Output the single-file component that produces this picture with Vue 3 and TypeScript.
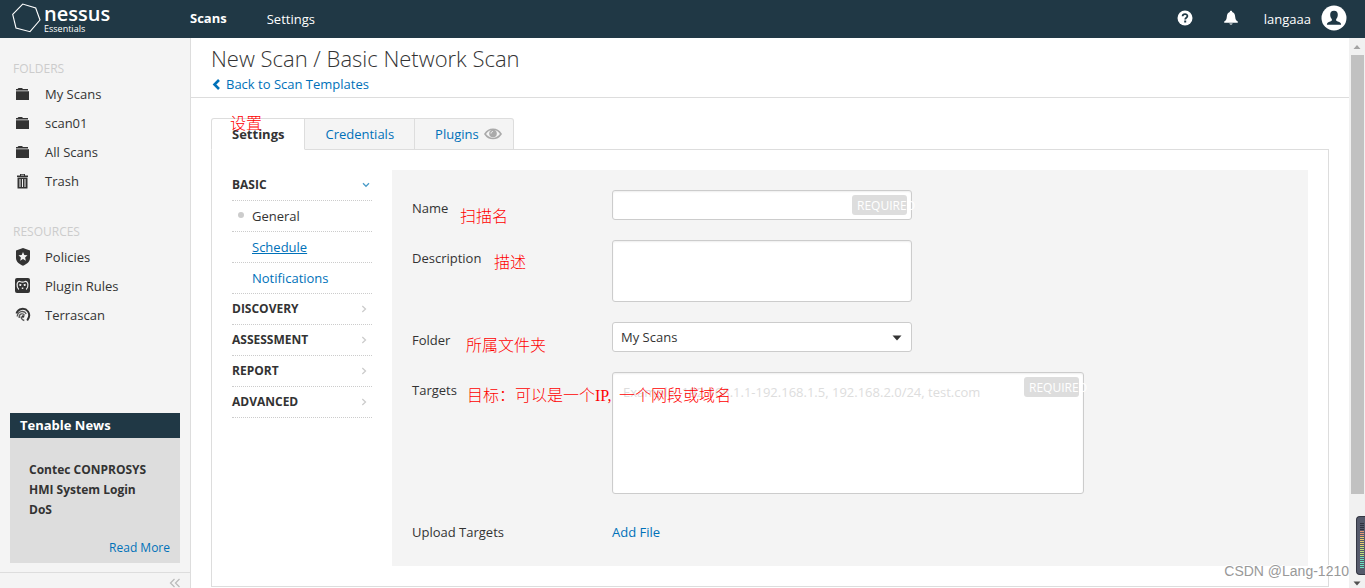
<script setup lang="ts">
import { ref } from 'vue'

interface Entry {
  label: string
  icon: string
}

const folders: Entry[] = [
  { label: 'My Scans', icon: 'folder' },
  { label: 'scan01', icon: 'folder' },
  { label: 'All Scans', icon: 'folder' },
  { label: 'Trash', icon: 'trash' },
]
const resources: Entry[] = [
  { label: 'Policies', icon: 'shield' },
  { label: 'Plugin Rules', icon: 'plugin' },
  { label: 'Terrascan', icon: 'terrascan' },
]
const groups = [
  { title: 'Folders', entries: folders },
  { title: 'Resources', entries: resources },
]
const basicPages = ['General', 'Schedule', 'Notifications']
const sections = ['Discovery', 'Assessment', 'Report', 'Advanced']
const meterBars = Array.from({ length: 23 }, (_, i) => i)

const name = ref('')
const description = ref('')
const folder = ref('My Scans')
const targets = ref('')

function meterClass(i: number): string {
  if (i < 4) return 'off'
  if (i < 7) return 'hot'
  if (i < 12) return 'warm'
  if (i < 17) return 'mild'
  return 'cool'
}
</script>

<template>
  <div class="app">
    <header class="topbar">
      <a class="brand" href="#" aria-label="nessus Essentials">
        <svg class="brand-mark" viewBox="0 0 32 32" aria-hidden="true">
          <path d="M1.7 12.3 11.7 2 24.7 6 29 18 19 29.7 5 26Z" />
        </svg>
        <span class="brand-text">
          <span class="brand-name">nessus</span>
          <span class="brand-edition">Essentials</span>
        </span>
      </a>
      <nav class="mainnav">
        <a class="current" href="#">Scans</a>
        <a href="#">Settings</a>
      </nav>
      <div class="account">
        <button class="icon-btn" type="button" aria-label="Help">
          <svg width="16" height="16" viewBox="0 0 16 16">
            <circle cx="8" cy="8" r="7.5" fill="#fff" />
            <path d="M5.6 6.3C5.7 3.5 10.4 3.5 10.4 6.1 10.4 7.7 8.2 7.7 8.2 9.4" fill="none" stroke="#203845" stroke-width="1.8" />
            <rect x="7.2" y="10.5" width="2" height="2" fill="#203845" />
          </svg>
        </button>
        <button class="icon-btn bell" type="button" aria-label="Notifications">
          <svg width="16" height="16" viewBox="0 0 16 16">
            <path d="M8 .8c.8 0 1.2.5 1.2 1.2C11.4 2.6 12 4.5 12.2 7c.2 2.4.8 3.6 2.6 4.6v1.2H1.2v-1.2C3 10.6 3.6 9.400 3.800 7 4 4.500 4.600 2.600 6.800 2 6.800 1.300 7.200.8 8 .8Z" fill="#fff" />
            <path d="M6.300 13.500h3.400c-.3 1.500-3.100 1.500-3.400 0Z" fill="#fff" />
          </svg>
        </button>
        <a class="user" href="#">
          <span>langaaa</span>
          <svg width="26" height="26" viewBox="0 0 26 26" aria-hidden="true">
            <circle cx="13" cy="13" r="12.500" fill="#fff" />
            <path d="M13 5.800c2.600 0 3.800 1.600 3.800 4 0 2-.7 3.200-1.600 4.300-.4 1.500.2 2 1.500 2.500 2.400.8 3.400 1.200 3.400 3.100H5.900c0-1.900 1-2.300 3.400-3.100 1.300-.5 1.900-1 1.500-2.500-.9-1.100-1.600-2.300-1.600-4.300 0-2.400 1.200-4 3.800-4Z" fill="#203845" />
          </svg>
        </a>
      </div>
    </header>

    <div class="body">
      <aside class="sidebar">
        <section v-for="g in groups" :key="g.title" class="group">
          <h2>{{ g.title }}</h2>
          <a v-for="e in g.entries" :key="e.label" class="entry" href="#">
            <svg v-if="e.icon === 'folder'" width="16" height="16" viewBox="0 0 16 16" aria-hidden="true">
              <path d="M1 4.500V3h1.500L3.500 2h3.500l1 1h5v1.500ZM1 5.200h13V14H1Z" />
            </svg>
            <svg v-else-if="e.icon === 'trash'" width="16" height="16" viewBox="0 0 16 16" aria-hidden="true">
              <path d="M5 2.500V1h5v1.500h3V4H2V2.500h3ZM6 2.500h3V1.800H6ZM2.500 4.500h10V15.500h-10ZM4.500 6v8h1V6ZM7 6v8h1V6ZM9.500 6v8h1V6Z" fill-rule="evenodd" />
            </svg>
            <svg v-else-if="e.icon === 'shield'" width="16" height="18" viewBox="0 0 16 18" aria-hidden="true">
              <path d="M8 0 15 2.500v7.500c0 4-4 6.500-7 7.800C5 16.500 1 14 1 10V2.500ZM8 4 6.700 7 3.500 7.300 5.900 9.500 5.200 12.700 8 11l2.800 1.700-.7-3.200 2.400-2.200L9.300 7Z" fill-rule="evenodd" />
            </svg>
            <svg v-else-if="e.icon === 'plugin'" width="16" height="16" viewBox="0 0 16 16" aria-hidden="true">
              <rect width="15" height="15" rx="2" />
              <path d="M5 3.500C1.500 3 1.200 9 3.800 11.500M10 3.500c3.500-.5 3.800 5.500 1.200 8M5 3.500c1.500.8 3.500.8 5 0" fill="none" stroke="#eee" stroke-width="1.200" />
              <path d="M4.300 5.800 6.500 6.300 6 8H4.500ZM10.700 5.800 8.500 6.300 9 8h1.500ZM6.800 9.500h1.500V11H6.800Z" fill="#eee" />
            </svg>
            <svg v-else width="16" height="16" viewBox="0 0 16 16" aria-hidden="true">
              <path d="M1.500 6.500C3 1 10 .5 13 4.500c2 3 1.500 6-.8 9" fill="none" stroke="#333" stroke-width="2" />
              <path d="M2.200 9.500C2.500 4 9.500 3 11.200 7M4.200 11C3.500 6.500 8.500 5.500 9.500 8.500" fill="none" stroke="#555" stroke-width="1.300" />
              <path d="M6 9.500c.2 2.200 1.500 3.500 3.300 4" fill="none" stroke="#555" stroke-width="1.300" />
              <circle cx="8" cy="9.500" r="1.300" />
            </svg>
            <span>{{ e.label }}</span>
          </a>
        </section>

        <section class="news">
          <h3>Tenable News</h3>
          <div class="news-body">
            <p>Contec CONPROSYS HMI System Login DoS</p>
            <a href="#">Read More</a>
          </div>
        </section>
        <div class="collapse">
          <button type="button" aria-label="Collapse sidebar">
            <svg width="12" height="10" viewBox="0 0 12 10">
              <path d="M5.500 1 1.500 5l4 4M10.500 1l-4 4 4 4" fill="none" stroke="#bbb" stroke-width="1.300" />
            </svg>
          </button>
        </div>
      </aside>

      <main class="main">
        <div class="pagehead">
          <h1>New Scan / Basic Network Scan</h1>
          <a href="#">
            <svg width="9" height="11" viewBox="0 0 9 11" aria-hidden="true">
              <path d="M8 1 3.500 5.500 8 10" fill="none" stroke="#0071b9" stroke-width="2.600" />
            </svg>
            <span>Back to Scan Templates</span>
          </a>
        </div>

        <div class="content">
          <div class="tabs" role="tablist">
            <button class="tab active" type="button" role="tab">Settings</button>
            <button class="tab" type="button" role="tab">Credentials</button>
            <button class="tab plugins" type="button" role="tab">
              <span>Plugins</span>
              <svg width="18" height="12" viewBox="0 0 18 12" aria-hidden="true">
                <path d="M1 6C5-.3 13-.3 17 6 13 12 5 12 1 6Z" fill="none" stroke="#aaa" stroke-width="1.600" />
                <circle cx="9" cy="5.500" r="3.800" fill="#aaa" />
                <path d="M7 5.500C7 4.300 7.800 3.500 9 3.500" fill="none" stroke="#f4f4f4" />
              </svg>
            </button>
            <span class="note note-settings" lang="zh">设置</span>
          </div>

          <div class="panel">
            <nav class="sections">
              <button class="section" type="button">
                <span>Basic</span>
                <svg class="open" width="8" height="6" viewBox="0 0 8 6"><path d="M1 1.300 4 4.300 7 1.300" /></svg>
              </button>
              <a v-for="p in basicPages" :key="p" href="#" class="subpage" :class="{ current: p === 'General', hovered: p === 'Schedule' }">{{ p }}</a>
              <button v-for="s in sections" :key="s" class="section" type="button">
                <span>{{ s }}</span>
                <svg class="closed" width="6" height="8" viewBox="0 0 6 8"><path d="M1.300 1 4.500 4 1.300 7" /></svg>
              </button>
            </nav>

            <form class="form" @submit.prevent>
              <div class="row">
                <div class="label-cell">
                  <label for="f-name">Name</label>
                  <span class="note note-name" lang="zh">扫描名</span>
                </div>
                <div class="field">
                  <input id="f-name" v-model="name" type="text" />
                  <span class="required">Required</span>
                </div>
              </div>
              <div class="row">
                <div class="label-cell">
                  <label for="f-desc">Description</label>
                  <span class="note note-desc" lang="zh">描述</span>
                </div>
                <div class="field">
                  <textarea id="f-desc" v-model="description" class="desc"></textarea>
                </div>
              </div>
              <div class="row">
                <div class="label-cell">
                  <label for="f-folder">Folder</label>
                  <span class="note note-folder" lang="zh">所属文件夹</span>
                </div>
                <div class="field">
                  <select id="f-folder" v-model="folder">
                    <option>My Scans</option>
                    <option>scan01</option>
                  </select>
                  <svg class="caret" width="10" height="6" viewBox="0 0 10 6" aria-hidden="true"><path d="M.5.500h9L5 5.500Z" fill="#333" /></svg>
                </div>
              </div>
              <div class="row">
                <div class="label-cell">
                  <label for="f-targets">Targets</label>
                  <span class="note note-targets" lang="zh">目标：可以是一个<span class="latin">IP,</span>一个网段或域名</span>
                </div>
                <div class="field wide">
                  <textarea id="f-targets" v-model="targets" class="targets" placeholder="Example: 192.168.1.1-192.168.1.5, 192.168.2.0/24, test.com"></textarea>
                  <span class="required">Required</span>
                </div>
              </div>
              <div class="row upload">
                <div class="label-cell"><span>Upload Targets</span></div>
                <a href="#">Add File</a>
              </div>
            </form>
          </div>
        </div>
      </main>

      <div class="scrollbar" aria-hidden="true">
        <svg class="arrow" viewBox="0 0 16 17"><path d="M4.500 11 8 7l3.500 4Z" fill="#a3a3a3" /></svg>
        <div class="thumb"></div>
        <div class="rest"></div>
        <svg class="arrow" viewBox="0 0 16 17"><path d="M4.500 10.500 8 14.500l3.500-4Z" fill="#505050" /></svg>
      </div>
    </div>

    <div class="meter" aria-hidden="true">
      <i v-for="i in meterBars" :key="i" :class="meterClass(i)"></i>
    </div>
    <div class="watermark">CSDN @Lang-1210</div>
  </div>
</template>

<style>
html,
body {
  margin: 0;
  overflow: hidden;
}
</style>

<style scoped>
.app {
  position: relative;
  display: flex;
  flex-direction: column;
  height: 100vh;
  overflow: hidden;
  background: #fff;
  color: #333;
  font: 13px/20px "Open Sans", "Noto Sans CJK SC", sans-serif;
}
.app * {
  box-sizing: border-box;
}
a {
  color: #0071b9;
  text-decoration: none;
}
button {
  margin: 0;
  padding: 0;
  border: 0;
  background: none;
  color: inherit;
  font: inherit;
  text-align: left;
}
svg {
  display: block;
  flex: none;
}
h1,
h2,
h3,
p {
  margin: 0;
}

/* top bar */
.topbar {
  display: flex;
  flex: none;
  height: 38px;
  background: #203845;
}
.brand {
  display: flex;
  width: 190px;
  padding-left: 11px;
  color: #fff;
}
.brand-mark {
  width: 32px;
  height: 32px;
  margin-top: 2px;
}
.brand-mark path {
  fill: none;
  stroke: #fff;
  stroke-width: 1.1;
}
.brand-text {
  display: flex;
  flex-direction: column;
  padding: 4px 0 0 1px;
}
.brand-name {
  font-size: 20px;
  font-weight: 600;
  line-height: 20px;
}
.brand-edition {
  font-size: 9px;
  line-height: 10px;
}
.mainnav {
  display: flex;
  gap: 40px;
  line-height: 38px;
}
.mainnav a {
  color: #fff;
}
.mainnav .current {
  font-weight: 700;
  line-height: 36px;
}
.account {
  display: flex;
  align-items: center;
  margin-left: auto;
  padding: 0 18px 3px 0;
}
.icon-btn {
  margin-right: 30px;
}
.icon-btn.bell {
  margin-right: 25px;
}
.user {
  display: flex;
  align-items: center;
  gap: 10px;
  color: #fff;
}
.user span {
  padding-top: 3px;
}

.body {
  display: flex;
  flex: 1;
  min-height: 0;
}

/* sidebar */
.sidebar {
  display: flex;
  flex: none;
  flex-direction: column;
  width: 191px;
  border-right: 1px solid #ddd;
  background: #f4f4f4;
}
.group {
  padding-top: 21px;
}
.group + .group {
  padding-top: 27px;
}
.group h2 {
  padding-left: 13px;
  color: #ccc;
  font-size: 12px;
  font-weight: 400;
  text-transform: uppercase;
}
.entry {
  display: flex;
  align-items: center;
  gap: 14px;
  height: 29px;
  padding-left: 15px;
  color: #333;
}
.entry svg {
  width: 16px;
  fill: #333;
}
.news {
  margin: auto 10px 9px;
  background: #ddd;
}
.news h3 {
  padding-left: 10px;
  background: #203845;
  color: #fff;
  font-size: 13px;
  font-weight: 700;
  line-height: 25px;
}
.news-body {
  display: flex;
  flex-direction: column;
  gap: 18px;
  padding: 22px 10px 5px 19px;
  font-size: 12px;
}
.news-body p {
  max-width: 130px;
  font-weight: 700;
}
.news-body a {
  align-self: flex-end;
}
.collapse {
  display: flex;
  flex: none;
  justify-content: flex-end;
  height: 16px;
  padding: 5px 9px 0 0;
  border-top: 1px solid #ddd;
}

/* main column */
.main {
  flex: 1;
  min-width: 0;
  overflow: hidden;
}
.pagehead {
  height: 60px;
  padding: 5px 20px 0;
  border-bottom: 1px solid #ddd;
}
.pagehead h1 {
  font-size: 22px;
  font-weight: 300;
  line-height: 30px;
}
.pagehead a {
  display: inline-flex;
  align-items: center;
  gap: 6px;
  line-height: 22px;
}
.content {
  padding: 20px 20px 0;
}
.tabs {
  position: relative;
  display: flex;
  width: max-content;
  margin-bottom: -1px;
}
.tab {
  height: 32px;
  padding: 0 20px;
  border: 1px solid #ddd;
  border-left-width: 0;
  background: #f4f4f4;
  color: #0071b9;
}
.tab.active {
  border-left-width: 1px;
  border-bottom-color: #fff;
  border-top-left-radius: 3px;
  background: #fff;
  color: #333;
  font-weight: 700;
}
.tab.plugins {
  display: flex;
  align-items: center;
  gap: 5px;
  padding-right: 11px;
  border-top-right-radius: 3px;
}
.panel {
  display: flex;
  gap: 20px;
  padding: 20px;
  border: 1px solid #ddd;
}
.sections {
  display: flex;
  flex: none;
  flex-direction: column;
  width: 140px;
}
.section,
.subpage {
  height: 31px;
  border-bottom: 1px dotted #ccc;
}
.section {
  display: flex;
  align-items: center;
  justify-content: space-between;
  padding-right: 2px;
  font-size: 12px;
  font-weight: 700;
  text-transform: uppercase;
}
.section path {
  fill: none;
  stroke: #ccc;
  stroke-width: 1.3;
}
.section .open path {
  stroke: #4a9cc9;
}
.section .closed {
  margin-right: 3px;
}
.subpage {
  position: relative;
  padding-left: 20px;
  line-height: 31px;
}
.subpage.current {
  color: #333;
}
.subpage.current::before {
  content: "";
  position: absolute;
  top: 11px;
  left: 6px;
  width: 6px;
  height: 6px;
  border-radius: 50%;
  background: #ccc;
}
.subpage.hovered {
  text-decoration: underline;
}

/* form */
.form {
  display: flex;
  flex: 1;
  flex-direction: column;
  gap: 20px;
  min-width: 0;
  padding: 20px;
  background: #f4f4f4;
}
.row {
  display: flex;
}
.label-cell {
  position: relative;
  flex: none;
  width: 200px;
  padding-top: 8px;
}
.field {
  position: relative;
  width: 300px;
}
.field.wide {
  width: 472px;
}
input,
textarea,
select {
  display: block;
  width: 100%;
  height: 30px;
  margin: 0;
  padding: 0 8px;
  border: 1px solid #ccc;
  border-radius: 3px;
  outline: 0;
  background: #fff;
  box-shadow: inset 0 1px 2px #eee;
  color: #333;
  font: inherit;
  resize: none;
  appearance: none;
}
textarea {
  padding: 9px 10px;
}
.desc {
  height: 62px;
}
.targets {
  height: 122px;
}
select {
  box-shadow: none;
}
textarea::placeholder {
  color: #ddd;
  opacity: 1;
}
.required {
  position: absolute;
  top: 5px;
  right: 5px;
  width: 55px;
  height: 20px;
  padding-left: 5px;
  border-radius: 3px;
  background: #ddd;
  color: #fff;
  font-size: 12px;
  line-height: 22px;
  text-transform: uppercase;
  white-space: nowrap;
}
.caret {
  position: absolute;
  top: 13px;
  right: 10px;
}
.upload {
  height: 32px;
}
.upload a {
  padding-top: 8px;
}

/* red annotations lying over the form */
.note {
  position: absolute;
  z-index: 2;
  color: #f00;
  font: 300 16px/20px "Noto Sans CJK SC", sans-serif;
  white-space: nowrap;
  pointer-events: none;
}
.latin {
  display: inline-block;
  width: 24px;
  font: 16px/20px "Liberation Serif", serif;
}
.note-settings {
  top: -6px;
  left: 19px;
}
.note-name {
  top: 15px;
  left: 48px;
}
.note-desc {
  top: 11px;
  left: 82px;
}
.note-folder {
  top: 12px;
  left: 54px;
}
.note-targets {
  top: 12px;
  left: 55px;
}

/* scroll bar */
.scrollbar {
  display: flex;
  flex: none;
  flex-direction: column;
  width: 16px;
  background: #f1f1f1;
}
.arrow {
  width: 16px;
  height: 17px;
}
.thumb {
  flex: 85;
  margin: 0 1px 0 2px;
  background: #c1c1c1;
}
.rest {
  flex: 15;
}

/* floating widgets */
.meter {
  position: absolute;
  right: 0;
  bottom: 13px;
  display: flex;
  flex-direction: column;
  gap: 1px;
  width: 9px;
  height: 59px;
  padding: 6px 1px 6px 3px;
  border: 1px solid #333642;
  border-right: 0;
  border-radius: 4px 0 0 4px;
  background: #555a6b;
}
.meter i {
  flex: 1;
}
.off {
  background: #30323f;
}
.hot {
  background: #e59a78;
}
.warm {
  background: #e5cc70;
}
.mild {
  background: #bde17c;
}
.cool {
  background: #6de0c0;
}
.watermark {
  position: absolute;
  right: 16px;
  bottom: 7px;
  color: #999;
  font: 14px/20px "Liberation Sans", Arial, sans-serif;
  text-shadow: -1px -1px 0 #fff;
}
</style>
